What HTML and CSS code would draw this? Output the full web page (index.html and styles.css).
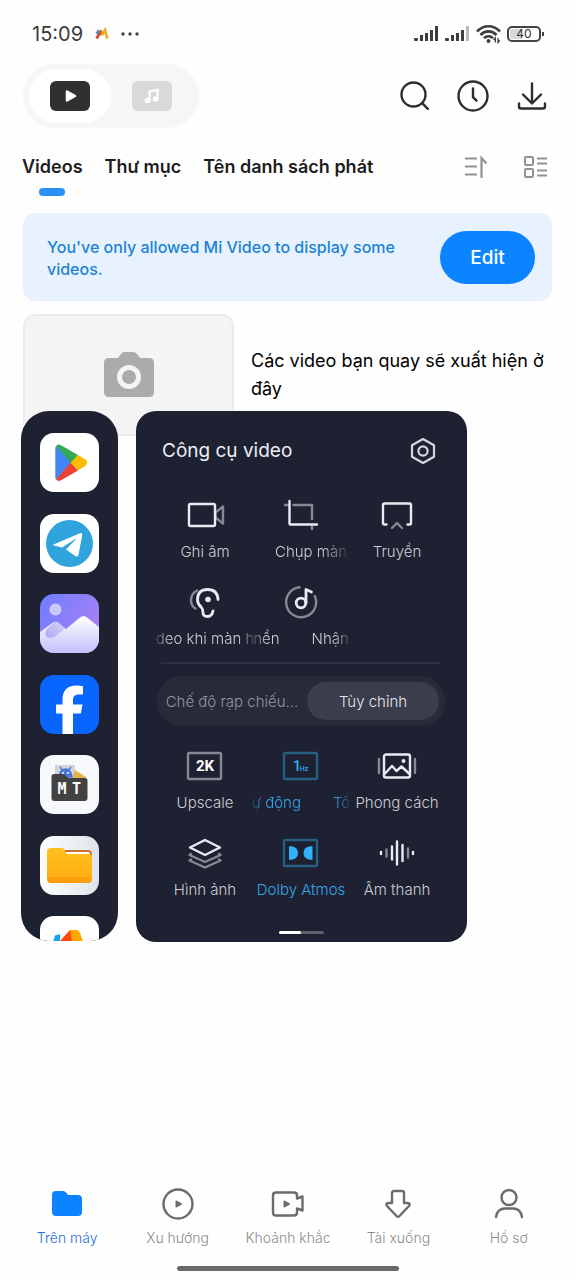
FILE: index.html
```html
<!DOCTYPE html>
<html lang="vi">
<head>
<meta charset="utf-8">
<meta name="viewport" content="width=device-width, initial-scale=1">
<title>Mi Video</title>
<link rel="stylesheet" href="styles.css">
</head>
<body>
<div class="screen">
  <header class="status">
    <div class="status-left">
      <span class="clock">15:09</span>
      <svg width="14" height="14" viewBox="0 0 14 14" fill="none"><path d="M1.500 7 4 3" stroke="#4a9fc0" stroke-width="2.500"/><path d="M1.500 11.500 6.500 3.500" stroke="#d8432c" stroke-width="2.600"/><path d="M5.500 3.500 7 8.500" stroke="#e9622b" stroke-width="2.200"/><path d="M7 8 10 3l2.300 8.500" stroke="#f5a623" stroke-width="2.600"/></svg>
      <svg width="18" height="4" viewBox="0 0 18 4" fill="#444"><circle cx="2" cy="2" r="1.700"/><circle cx="9" cy="2" r="1.700"/><circle cx="16" cy="2" r="1.700"/></svg>
    </div>
    <div class="status-right">
      <svg width="25" height="16" viewBox="0 0 25 16" fill="#3d3d3d"><rect x="0" y="12" width="4" height="3" rx="1"/><rect x="6" y="9" width="3" height="6"/><rect x="11" y="7" width="3" height="8"/><rect x="16" y="4" width="3" height="11"/><rect x="21" y="0" width="3" height="15"/></svg>
      <svg width="25" height="16" viewBox="0 0 25 16" fill="#3d3d3d"><rect x="0" y="12" width="4" height="3" rx="1"/><rect x="6" y="9" width="3" height="6"/><rect x="11" y="7" width="3" height="8"/><rect x="16" y="4" width="3" height="11"/><rect x="21" y="0" width="3" height="15" fill="#bbb"/></svg>
      <svg width="25" height="20" viewBox="0 0 25 20" fill="none" stroke="#3d3d3d" stroke-width="2.600"><path d="M1 7.500C7.500.5 17.500.5 24 7.500M4.500 11c4.500-4.800 11.500-4.800 16 0M8 14.200c2.500-2.600 6.500-2.600 9 0"/><circle cx="12.500" cy="17" r="2" fill="#3d3d3d" stroke="none"/><path d="M19.300 18.500v-4.500l-1.800 2M22 14v4.500l1.800-2" stroke-width="1.300"/></svg>
      <span class="battery"><span class="battery-level">40</span></span>
    </div>
  </header>

  <div class="toolbar">
    <div class="switch">
      <button class="switch-btn active" aria-label="Video"><svg width="40" height="30" viewBox="0 0 40 30"><rect width="40" height="30" rx="6" fill="#303030"/><path d="M17 10.500v9L25 15Z" fill="#fff" stroke="#fff" stroke-width="2.500" stroke-linejoin="round"/></svg></button>
      <button class="switch-btn" aria-label="Music"><svg width="40" height="30" viewBox="0 0 40 30"><rect width="40" height="30" rx="6" fill="#d9d9d9"/><g fill="none" stroke="#fff" stroke-width="2.200"><path d="M17.500 19.500v-9l8-1.600v9"/><circle cx="15.600" cy="19.500" r="1.700"/><circle cx="23.600" cy="18" r="1.700"/></g></svg></button>
    </div>
    <div class="actions">
      <button aria-label="Search"><svg width="32" height="32" viewBox="0 0 32 32" fill="none" stroke="#2d2d2d" stroke-width="2.400" stroke-linecap="round"><circle cx="15.500" cy="14.500" r="12"/><path d="m24.200 23.200 5.600 5.600"/></svg></button>
      <button aria-label="History"><svg width="32" height="32" viewBox="0 0 32 32" fill="none" stroke="#2d2d2d" stroke-width="2.400" stroke-linecap="round" stroke-linejoin="round"><circle cx="16" cy="16" r="14.500"/><path d="M16 8.500v8.700l3.500 3.500"/></svg></button>
      <button aria-label="Download"><svg width="32" height="32" viewBox="0 0 32 32" fill="none" stroke="#2d2d2d" stroke-width="2.400" stroke-linecap="round" stroke-linejoin="round"><path d="M16 3.500v19M7 14.500l9 9 9-9M3 23.500v3q0 2 2 2h22q2 0 2-2v-3"/></svg></button>
    </div>
  </div>

  <nav class="tabs">
    <div class="tab-list">
      <a class="tab current" href="#videos">Videos</a>
      <a class="tab" href="#folders">Thư mục</a>
      <a class="tab" href="#playlists">Tên danh sách phát</a>
    </div>
    <div class="tab-tools">
      <button aria-label="Sort"><svg width="24" height="24" viewBox="0 0 24 24" fill="none" stroke="#929292" stroke-width="2.200"><path d="M1 3.500h12M1 11.500h12M1 19.500h12M17.500 23V3l5 5.500" /></svg></button>
      <button aria-label="View"><svg width="24" height="24" viewBox="0 0 24 24" fill="none" stroke="#929292" stroke-width="2"><rect x="2" y="2" width="8" height="8" rx="1"/><rect x="2" y="14" width="8" height="8" rx="1"/><path d="M14 3.500h10M14 8.500h10M14 15.500h10M14 20.500h10"/></svg></button>
    </div>
  </nav>

  <main class="content">
    <section class="notice">
      <p>You've only allowed Mi Video to display some videos.</p>
      <button class="edit">Edit</button>
    </section>
    <section class="empty">
      <div class="thumb"><svg width="52" height="46" viewBox="0 0 52 46"><path d="M6 6h9l3-4q1.500-2 4-2h8q2.500 0 4 2l3 4h9q5 0 5 5v29q0 5-5 5H6q-5 0-5-5V11q0-5 5-5Z" fill="#ababab"/><circle cx="26" cy="25" r="9.500" fill="none" stroke="#f4f4f4" stroke-width="5"/></svg></div>
      <p>Các video bạn quay sẽ xuất hiện ở đây</p>
    </section>
  </main>

  <footer class="bottom">
    <nav class="bottom-nav">
      <a class="current" href="#local"><svg width="34" height="34" viewBox="0 0 34 34"><path d="M6 4h7q2 0 3.500 2l1.500 2h10q4 0 4 4v13q0 4-4 4H6q-4 0-4-4V8q0-4 4-4Z" fill="#0d84ff"/></svg>Trên máy</a>
      <a href="#trending"><svg width="34" height="34" viewBox="0 0 34 34" fill="none" stroke="#6b6b6b" stroke-width="2.400"><circle cx="17" cy="17" r="14.500"/><path d="M15.500 14.500v5l4.500-2.500Z" fill="#6b6b6b" stroke-width="2" stroke-linejoin="round"/></svg>Xu hướng</a>
      <a href="#moments"><svg width="34" height="34" viewBox="0 0 34 34" fill="none" stroke="#6b6b6b" stroke-width="2.400" stroke-linejoin="round"><path d="M5 5.500h18q3 0 3 3v3l5.500-2v14l-5.500-2v4q0 3-3 3H5q-3 0-3-3v-17q0-3 3-3Z"/><path d="M13.500 14.500v5l4.500-2.500Z" fill="#6b6b6b" stroke-width="2"/></svg>Khoảnh khắc</a>
      <a href="#downloads"><svg width="34" height="34" viewBox="0 0 34 34" fill="none" stroke="#6b6b6b" stroke-width="2.400" stroke-linejoin="round"><path d="M13 4h8q2 0 2 2v10h3.500q3.500.5 1.500 3L18.500 29q-1.500 1.500-3 0L6 19q-2-2.500 1.500-3H11V6q0-2 2-2Z"/></svg>Tài xuống</a>
      <a href="#profile"><svg width="34" height="34" viewBox="0 0 34 34" fill="none" stroke="#6b6b6b" stroke-width="2.400" stroke-linecap="round"><circle cx="17" cy="10.500" r="7.500"/><path d="M4 30c1-6 5-8.500 9-8.500h8c4 0 8 2.500 9 8.500"/></svg>Hồ sơ</a>
    </nav>
    <div class="home-bar"></div>
  </footer>

  <aside class="overlay">
    <div class="dock">
      <div class="dock-list">
        <button class="app" aria-label="Google Play"><svg viewBox="0 0 59 59"><rect width="59" height="59" fill="#fff"/><path d="M16 13 33.500 29.500 16 46.500q-.7-1-.7-2.500V15q0-1.200.7-2Z" fill="#4285f4"/><path d="M16 13q2-2.300 5-.8L38 22 31 30 16 13Z" fill="#34a853"/><path d="M16 46.500q2 2.300 5 .8L38 37.500 31 29 16 46.500Z" fill="#ea4335"/><path d="M38 22 45.500 26.500q3.500 3 0 6.200L38 37.500 30.500 29.700Z" fill="#fbbc04"/></svg></button>
        <button class="app" aria-label="Telegram"><svg viewBox="0 0 59 59"><rect width="59" height="59" fill="#fff"/><circle cx="29.500" cy="29.500" r="23.500" fill="#2ea3dc"/><path d="M13.500 30.500 40 19.200q2.500-.7 2.200 2L38.500 41q-.8 2.500-3.200 1L26 35.500 37 24 22 33.500l-8-2q-2-.5-.5-1Z" fill="#fff"/></svg></button>
        <button class="app" aria-label="Gallery"><svg viewBox="0 0 59 59"><defs><linearGradient id="sky" x2="1" y2=".6"><stop stop-color="#6f7cff"/><stop offset="1" stop-color="#a782f4"/></linearGradient><linearGradient id="hill" x2="0" y2="1"><stop stop-color="#fff"/><stop offset="1" stop-color="#c3c2fc"/></linearGradient><linearGradient id="ridge" x1="1" x2="0" y2="1"><stop stop-color="#d8d2f8"/><stop offset="1" stop-color="#b0a8f4"/></linearGradient></defs><rect width="59" height="59" fill="url(#sky)"/><circle cx="15.500" cy="15.500" r="6" fill="#c9c8fb"/><path d="M0 38 13 28.500q3-2 6 1L26 35 40 23.500q3.500-3 7 0L59 33v26H0Z" fill="url(#hill)"/><path d="M7 35 13 29q3-2.500 6 0l6 5.500-9 7.500q-5 3.500-9 1-3.500-3.500 0-8Z" fill="url(#ridge)"/></svg></button>
        <button class="app" aria-label="Facebook"><svg viewBox="0 0 59 59"><rect width="59" height="59" fill="#0866ff"/><path d="M22.500 59V38.500H16v-9h6.500V25q0-14.500 14-14.500 4 0 6.500.8v8.200h-4q-6 0-6 5v5h9.500l-1.700 9H33V59Z" fill="#fff"/></svg></button>
        <button class="app" aria-label="MT Manager"><svg viewBox="0 0 59 59"><rect width="59" height="59" fill="#f7f9fc"/><rect x="15" y="10" width="20" height="16" fill="#d1d4d8"/><path d="m35 15 11 7v5H31Z" fill="#e2b44a"/><path d="M19 22q1-8 6.500-8T32 22ZM20 12l3 4M31 12l-3 4" fill="#4b78d8" stroke="#4b78d8" stroke-width="1.500"/><circle cx="23" cy="18" r="1" fill="#fff"/><circle cx="28" cy="18" r="1" fill="#fff"/><path d="M14 19h10l4 4h17q2.500 0 2.500 2.500V43q0 3-3 3h-30q-3 0-3-3V21.500q0-2.500 2.500-2.500Z" fill="#424242"/><text x="17.500" y="39" class="mt-text">M</text><text x="32" y="39" class="mt-text">T</text></svg></button>
        <button class="app" aria-label="File Manager"><svg viewBox="0 0 59 59"><defs><linearGradient id="paper" x2="1"><stop stop-color="#fff"/><stop offset="1" stop-color="#dce4ea"/></linearGradient><linearGradient id="folder" x2="0" y2="1"><stop stop-color="#ffc31f"/><stop offset="1" stop-color="#ffa80f"/></linearGradient></defs><rect width="59" height="59" fill="url(#paper)"/><rect x="20" y="14" width="32" height="16" rx="4" fill="#c9722e"/><rect x="22" y="16" width="28" height="12" rx="2" fill="#fff"/><path d="M11 12h12l4 6h22q3 0 3 3v22q0 4-4 4H11q-4 0-4-4V16q0-4 4-4Z" fill="url(#folder)"/><path d="M7.500 41h44v3q-1 3-4 3H11.500q-3 0-4-3Z" fill="#ff9d0a"/></svg></button>
        <button class="app" aria-label="Mi Video"><svg viewBox="0 0 59 59"><rect width="59" height="59" fill="#fff"/><path d="M13 26 15 19.500 20 18v12Z" fill="#16a5e8"/><path d="M19 26 30 14l3 1v16H18Z" fill="#ff4710"/><path d="M30 14h7q2 0 3 3l5 14H33Z" fill="#fda700"/></svg></button>
      </div>
    </div>

    <div class="panel">
      <div class="panel-head">
        <h2>Công cụ video</h2>
        <button aria-label="Settings"><svg width="28" height="28" viewBox="0 0 28 28" fill="none" stroke="#d4d6de" stroke-width="2.200" stroke-linejoin="round"><path d="M14 2 25 8.200v11.600L14 26 3 19.800V8.200Z"/><circle cx="14" cy="14" r="4.600"/></svg></button>
      </div>

      <div class="tiles">
        <button class="tile"><svg class="ico" viewBox="0 0 40 32"><path d="m30.500 13.500 7.500-6v17l-7.500-6Z" class="dim"/><rect x="4" y="5" width="26" height="22" rx="1.500"/></svg><span>Ghi âm</span></button>
        <button class="tile"><svg class="ico" viewBox="0 0 40 32"><path d="M4 6h3M12.500 6H31v14M31 27.500V30" class="dim"/><path d="M8.500 2v22.500q0 1 1 1H36"/></svg><span class="fade-right">Chụp màn</span></button>
        <button class="tile"><svg class="ico" viewBox="0 0 40 32"><path d="m15 29 5-5 5 5" class="dim"/><path d="M9.500 25.500h-2q-1.500 0-1.500-1.500V6q0-1.500 1.500-1.500h25q1.500 0 1.500 1.500v18q0 1.500-1.500 1.500h-2"/></svg><span>Truyền</span></button>
        <button class="tile"><svg class="ico" viewBox="0 0 40 32"><path d="M12 4.500Q6 8 6 14t4.500 8.500" class="dim"/><path d="M33 13.500q-.5-10-10.500-10T12.500 14q0 4 4 7.500 1.500 2 1.500 5 0 4 4.500 4t5.500-5.500" stroke-width="2.800"/><circle cx="23" cy="13.500" r="2.800" class="solid"/></svg><span class="fade-both">deo khi màn h</span></button>
        <button class="tile"><svg class="ico" viewBox="0 0 40 32"><path d="M18.500 1.300A15 15 0 1 0 33.800 10" class="dim"/><circle cx="20" cy="17" r="4.800" stroke-width="2.800"/><path d="M25 17V3.500L30.500 6" stroke-width="2.800"/></svg><span class="fade-both"><span>nền</span><span>Nhận</span></span></button>
      </div>

      <hr>

      <div class="mode" role="group">
        <button>Chế độ rạp chiếu...</button>
        <button class="active">Tùy chỉnh</button>
      </div>

      <div class="tiles">
        <button class="tile"><svg class="ico" viewBox="0 0 40 32"><rect x="3" y="3" width="33" height="26" rx="1.500" class="dim"/><text x="20" y="21" class="ico-text">2K</text></svg><span>Upscale</span></button>
        <button class="tile on"><svg class="ico" viewBox="0 0 40 32"><rect x="3" y="3" width="33" height="26" rx="1.500" class="dim"/><text x="16" y="21" class="ico-text">1</text><text x="23" y="21" class="ico-text tiny">Hz</text></svg><span class="fade-both"><span>ự động</span><span>Tố</span></span></button>
        <button class="tile"><svg class="ico" viewBox="0 0 40 32"><path d="M2 9v14M38 9v14" class="dim"/><rect x="7" y="4.500" width="26" height="23" rx="2"/><path d="m8 23.500 7-7.500 4.500 5 5-4.500 7.500 7"/><circle cx="26.500" cy="11" r="2" class="solid"/></svg><span>Phong cách</span></button>
        <button class="tile"><svg class="ico" viewBox="0 0 40 32"><path d="m6 17-1.500 1L20 25l15.500-7-1.500-1M6 22.500l-1.500 1L20 30.500l15.500-7-1.500-1" class="dim"/><path d="M20 3 35 10.500 20 18 5 10.500Z"/></svg><span>Hình ảnh</span></button>
        <button class="tile on"><svg class="ico" viewBox="0 0 40 32"><rect x="3" y="3" width="33" height="26" rx="1.500" class="dim"/><path d="M8 9.200h2.500q6.500 1 6.500 6.800t-6.500 6.800H8ZM31.500 9.200H29q-6.500 1-6.500 6.800t6.500 6.800h2.500Z" class="solid"/></svg><span>Dolby Atmos</span></button>
        <button class="tile"><svg class="ico" viewBox="0 0 40 32"><path d="M9.500 12.500v7M31 11.500v9" class="dim"/><path d="M4 15v2M15 9.500v13M20 4.500v23M25.500 8v16M36 15v2"/></svg><span>Âm thanh</span></button>
      </div>

      <div class="pager"><span></span></div>
    </div>
  </aside>
</div>
</body>
</html>
```
FILE: styles.css
```css
* { box-sizing: border-box; }

body {
  margin: 0;
  background: #fefefe;
  color: #000;
  font-family: Inter, "Noto Sans", sans-serif;
}

button {
  padding: 0;
  border: 0;
  background: none;
  color: inherit;
  font: inherit;
  cursor: pointer;
}

a { color: inherit; text-decoration: none; }
p, h2 { margin: 0; }
svg { display: block; flex: none; }

.screen {
  position: relative;
  display: flex;
  flex-direction: column;
  min-height: 100vh;
  overflow: hidden;
}

/* Status bar */
.status {
  display: flex;
  justify-content: space-between;
  align-items: center;
  height: 64px;
  padding: 4px 35px 0 32px;
}
.status-left, .status-right { display: flex; align-items: center; }
.status-left { gap: 12px; }
.status-right { gap: 6px; }
.clock { font-size: 20px; line-height: 24px; color: #3a3a3a; }
.battery {
  position: relative;
  width: 34px;
  height: 16px;
  padding: 1px;
  border: 2px solid #444;
  border-radius: 5px;
}
.battery::after {
  content: "";
  position: absolute;
  top: 4px;
  right: -5px;
  width: 2px;
  height: 4px;
  background: #444;
}
.battery-level {
  display: block;
  height: 10px;
  border-radius: 2px;
  background: linear-gradient(90deg, #d8d8d8 40%, transparent 40%);
  color: #333;
  font-size: 12px;
  line-height: 10px;
  text-align: center;
}

/* Toolbar */
.toolbar {
  display: flex;
  justify-content: space-between;
  align-items: center;
  padding: 0 28px 0 23px;
}
.switch {
  display: flex;
  padding: 5px 6px;
  border-radius: 32px;
  background: #f6f6f6;
}
.switch-btn {
  display: grid;
  place-items: center;
  width: 82px;
  height: 54px;
  border-radius: 27px;
}
.switch-btn.active { background: #fff; }
.actions { display: flex; gap: 27px; }

/* Tabs */
.tabs {
  display: flex;
  justify-content: space-between;
  align-items: flex-start;
  padding: 27px 29px 0 22px;
}
.tab-list { display: flex; gap: 22px; }
.tab {
  display: flex;
  flex-direction: column;
  align-items: center;
  gap: 9px;
  color: #1d1d1d;
  font-size: 18px;
  line-height: 24px;
  font-weight: 600;
}
.tab.current::after {
  content: "";
  width: 26px;
  height: 8px;
  border-radius: 4px;
  background: #2a8ff5;
}
.tab-tools { display: flex; gap: 35px; }

/* Content */
.content {
  display: flex;
  flex: 1;
  flex-direction: column;
  gap: 13px;
  padding: 17px 24px 0 23px;
}
.notice {
  display: flex;
  justify-content: space-between;
  align-items: center;
  gap: 40px;
  padding: 18px 17px 17px 24px;
  border-radius: 12px;
  background: #e8f1fe;
}
.notice p {
  color: #1b83d6;
  font-size: 16px;
  line-height: 22px;
  font-weight: 500;
}
.edit {
  flex: none;
  width: 95px;
  height: 53px;
  border-radius: 27px;
  background: #0d84ff;
  color: #fff;
  font-size: 19px;
  font-weight: 500;
}
.empty { display: flex; align-items: center; gap: 17px; }
.thumb {
  display: grid;
  place-items: center;
  flex: none;
  width: 211px;
  height: 122px;
  border: 2px solid #ececec;
  border-radius: 12px;
  background: #f4f4f4;
}
.empty p { font-size: 18px; line-height: 28px; }

/* Bottom navigation */
.bottom-nav {
  display: grid;
  grid-template-columns: repeat(5, 1fr);
  padding: 0 12px;
}
.bottom-nav a {
  display: flex;
  flex-direction: column;
  align-items: center;
  gap: 7px;
  color: #8c8c8c;
  font-size: 14px;
  line-height: 20px;
  font-weight: 300;
}
.bottom-nav .current { color: #1f6fd6; }
.home-bar {
  width: 222px;
  height: 5px;
  margin: 18px auto 9px;
  border-radius: 3px;
  background: #6a6a6a;
}

/* Floating dock and tool panel */
.overlay {
  position: absolute;
  top: 411px;
  left: 21px;
  display: flex;
  gap: 18px;
  color: #cccdd5;
}
.dock {
  width: 97px;
  height: 530px;
  padding-top: 22px;
  border-radius: 28px;
  background: #1e2131;
  overflow: hidden;
}
.dock-list {
  display: flex;
  flex-direction: column;
  align-items: center;
  justify-content: space-between;
  height: 542px;
}
.app {
  width: 59px;
  height: 59px;
  border-radius: 14px;
  overflow: hidden;
}
.mt-text { fill: #fff; font: 700 15px "DejaVu Sans Mono", monospace; }

.panel {
  width: 331px;
  padding: 26px 22px 8px 21px;
  border-radius: 20px;
  background: #1e2131;
}
.panel-head {
  display: flex;
  justify-content: space-between;
  align-items: center;
  padding: 0 8px 0 5px;
}
.panel-head h2 {
  color: #eceef6;
  font-size: 19px;
  line-height: 28px;
  font-weight: 400;
}
.tiles {
  display: grid;
  grid-template-columns: repeat(3, minmax(0, 1fr));
  row-gap: 24px;
  margin-top: 34px;
}
.tile {
  display: flex;
  flex-direction: column;
  align-items: center;
  gap: 11px;
  font-size: 15px;
  line-height: 20px;
  font-weight: 300;
  white-space: nowrap;
}
.tile.on { color: #35a6ec; }
.ico {
  width: 40px;
  height: 32px;
  overflow: visible;
  fill: none;
  stroke: #e9ebf3;
  stroke-width: 2.4px;
  stroke-linecap: round;
  stroke-linejoin: round;
}
.ico .dim { stroke: #868894; }
.ico .solid { fill: #e9ebf3; stroke: none; }
.on .dim { stroke: #265f84; }
.on .solid { fill: #32b2fa; }
.ico-text {
  fill: #fff;
  stroke: none;
  font: 700 15px Roboto, sans-serif;
  text-anchor: middle;
}
.on .ico-text { fill: #32aaf5; font-weight: 500; }
.on .tiny { font-size: 7px; }

/* Scrolling labels fade out at their edges */
.fade-right { padding-left: 22px; align-self: flex-start; }
.fade-right { mask-image: linear-gradient(90deg, #000 75%, transparent 105%); }
.fade-both {
  display: flex;
  gap: 32px;
  mask-image: linear-gradient(90deg, transparent -4%, #000 14%, #000 84%, transparent 104%);
}

hr {
  height: 2px;
  margin: 13px 5px 12px 4px;
  border: 0;
  background: #2d303f;
}
.mode {
  display: grid;
  grid-template-columns: 138px 1fr;
  gap: 6px;
  padding: 6px;
  border-radius: 24px;
  background: #272a39;
}
.mode button {
  height: 38px;
  border-radius: 19px;
  color: #9496a1;
  font-size: 15px;
  font-weight: 300;
  white-space: nowrap;
}
.mode .active { background: #3a3d4b; color: #e4e6ee; }
.mode + .tiles { margin-top: 24px; }
.pager {
  width: 45px;
  height: 3px;
  margin: 31px auto 0;
  border-radius: 2px;
  background: #5f616d;
}
.pager span {
  display: block;
  width: 50%;
  height: 3px;
  border-radius: 2px;
  background: #fff;
}
```
